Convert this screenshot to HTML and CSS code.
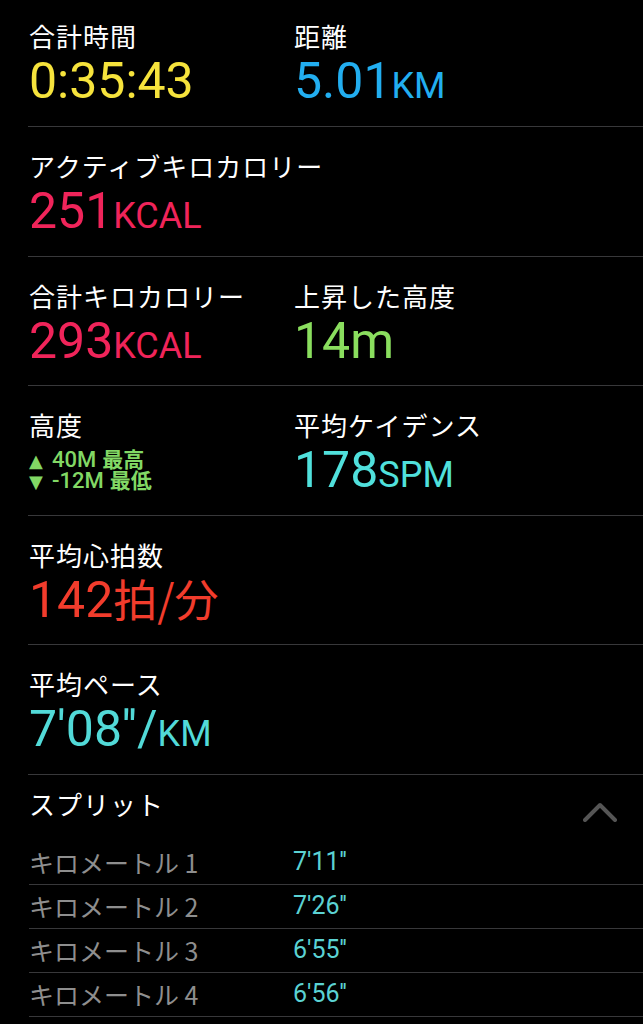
FILE: index.html
```html
<!DOCTYPE html>
<html lang="ja">
<head>
    <meta charset="UTF-8">
    <meta name="viewport" content="width=device-width, initial-scale=1.0">
    <title>ワークアウト</title>
    <link rel="stylesheet" href="styles.css">
</head>
<body>
    <div class="workout">
        <section class="row first">
            <div class="metric">
                <div class="label">合計時間</div>
                <div class="value time">0:35:43</div>
            </div>
            <div class="metric">
                <div class="label">距離</div>
                <div class="value distance">5.01<span class="unit">KM</span></div>
            </div>
        </section>

        <section class="row">
            <div class="metric">
                <div class="label">アクティブキロカロリー</div>
                <div class="value kcal">251<span class="unit">KCAL</span></div>
            </div>
        </section>

        <section class="row">
            <div class="metric">
                <div class="label">合計キロカロリー</div>
                <div class="value kcal">293<span class="unit">KCAL</span></div>
            </div>
            <div class="metric">
                <div class="label">上昇した高度</div>
                <div class="value climb">14m</div>
            </div>
        </section>

        <section class="row">
            <div class="metric">
                <div class="label">高度</div>
                <div class="elevation">
                    <div class="elev-line"><span class="tri">▲</span>40M<span class="jp">最高</span></div>
                    <div class="elev-line"><span class="tri">▼</span>-12M<span class="jp">最低</span></div>
                </div>
            </div>
            <div class="metric">
                <div class="label">平均ケイデンス</div>
                <div class="value cadence">178<span class="unit">SPM</span></div>
            </div>
        </section>

        <section class="row">
            <div class="metric">
                <div class="label">平均心拍数</div>
                <div class="value heart">142<span class="unit-jp">拍/分</span></div>
            </div>
        </section>

        <section class="row">
            <div class="metric">
                <div class="label">平均ペース</div>
                <div class="value pace">7'08''/<span class="unit">KM</span></div>
            </div>
        </section>

        <section class="splits">
            <div class="splits-head">
                <span class="label">スプリット</span>
                <svg class="chevron" width="34" height="20" viewBox="0 0 34 20">
                    <polyline points="2,18 17,3 32,18" fill="none" stroke="#555" stroke-width="4" stroke-linecap="round" stroke-linejoin="round"/>
                </svg>
            </div>
            <div class="split"><span class="split-name">キロメートル 1</span><span class="split-time">7'11''</span></div>
            <div class="split"><span class="split-name">キロメートル 2</span><span class="split-time">7'26''</span></div>
            <div class="split"><span class="split-name">キロメートル 3</span><span class="split-time">6'55''</span></div>
            <div class="split"><span class="split-name">キロメートル 4</span><span class="split-time">6'56''</span></div>
        </section>
    </div>
</body>
</html>
```

FILE: styles.css
```css
body {
    margin: 0;
    background: #000;
    color: #fff;
    font-family: "Noto Sans CJK JP", sans-serif;
}
.workout {
    margin-left: 28px;
}
.row {
    display: grid;
    grid-template-columns: 265px 1fr;
    padding: 24px 0 18.5px 1px;
    border-bottom: 1px solid #38383a;
}
.row.first {
    padding-top: 21px;
    padding-bottom: 19px;
}
.label {
    height: 30px;
    font-size: 26px;
    line-height: 30px;
    letter-spacing: 1px;
    white-space: nowrap;
    color: #fff;
}
.value {
    height: 52px;
    margin-top: 4px;
    font-family: Roboto, "Noto Sans CJK JP", sans-serif;
    font-size: 50px;
    line-height: 52px;
    white-space: nowrap;
}
.unit {
    font-size: 36px;
    line-height: 1;
}
.unit-jp {
    font-family: "Noto Sans CJK JP", sans-serif;
    font-size: 44px;
    line-height: 1;
}
.time { color: #f6e33c; }
.distance { color: #22aef0; }
.kcal { color: #f0245a; }
.climb { color: #8ade5e; }
.cadence { color: #50e0dc; }
.heart { color: #f23c2c; }
.pace { color: #52dad8; }
.elevation {
    margin-top: 8px;
    font-family: Roboto, "Noto Sans CJK JP", sans-serif;
    font-weight: 500;
    font-size: 22px;
    color: #82d865;
}
.elev-line {
    height: 20.5px;
    line-height: 20.5px;
    white-space: nowrap;
}
.elevation .tri {
    display: inline-block;
    width: 23px;
    font-family: "DejaVu Sans", sans-serif;
    font-size: 18px;
    line-height: 1;
}
.elevation .jp {
    margin-left: 6px;
    font-family: "Noto Sans CJK JP", sans-serif;
    font-size: 21px;
    font-weight: 700;
    line-height: 1;
}
.splits {
    padding-left: 1px;
}
.splits-head {
    display: flex;
    justify-content: space-between;
    align-items: flex-start;
    height: 52px;
    padding: 14px 26px 0 0;
}
.chevron {
    margin-top: 13px;
}
.split {
    display: grid;
    grid-template-columns: 264px 1fr;
    height: 43px;
    align-items: center;
    border-bottom: 1px solid #38383a;
    font-size: 25px;
    line-height: 30px;
}
.split-name {
    color: #8e8e8e;
}
.split-time {
    font-family: Roboto, sans-serif;
    color: #5bd2d3;
}
```
